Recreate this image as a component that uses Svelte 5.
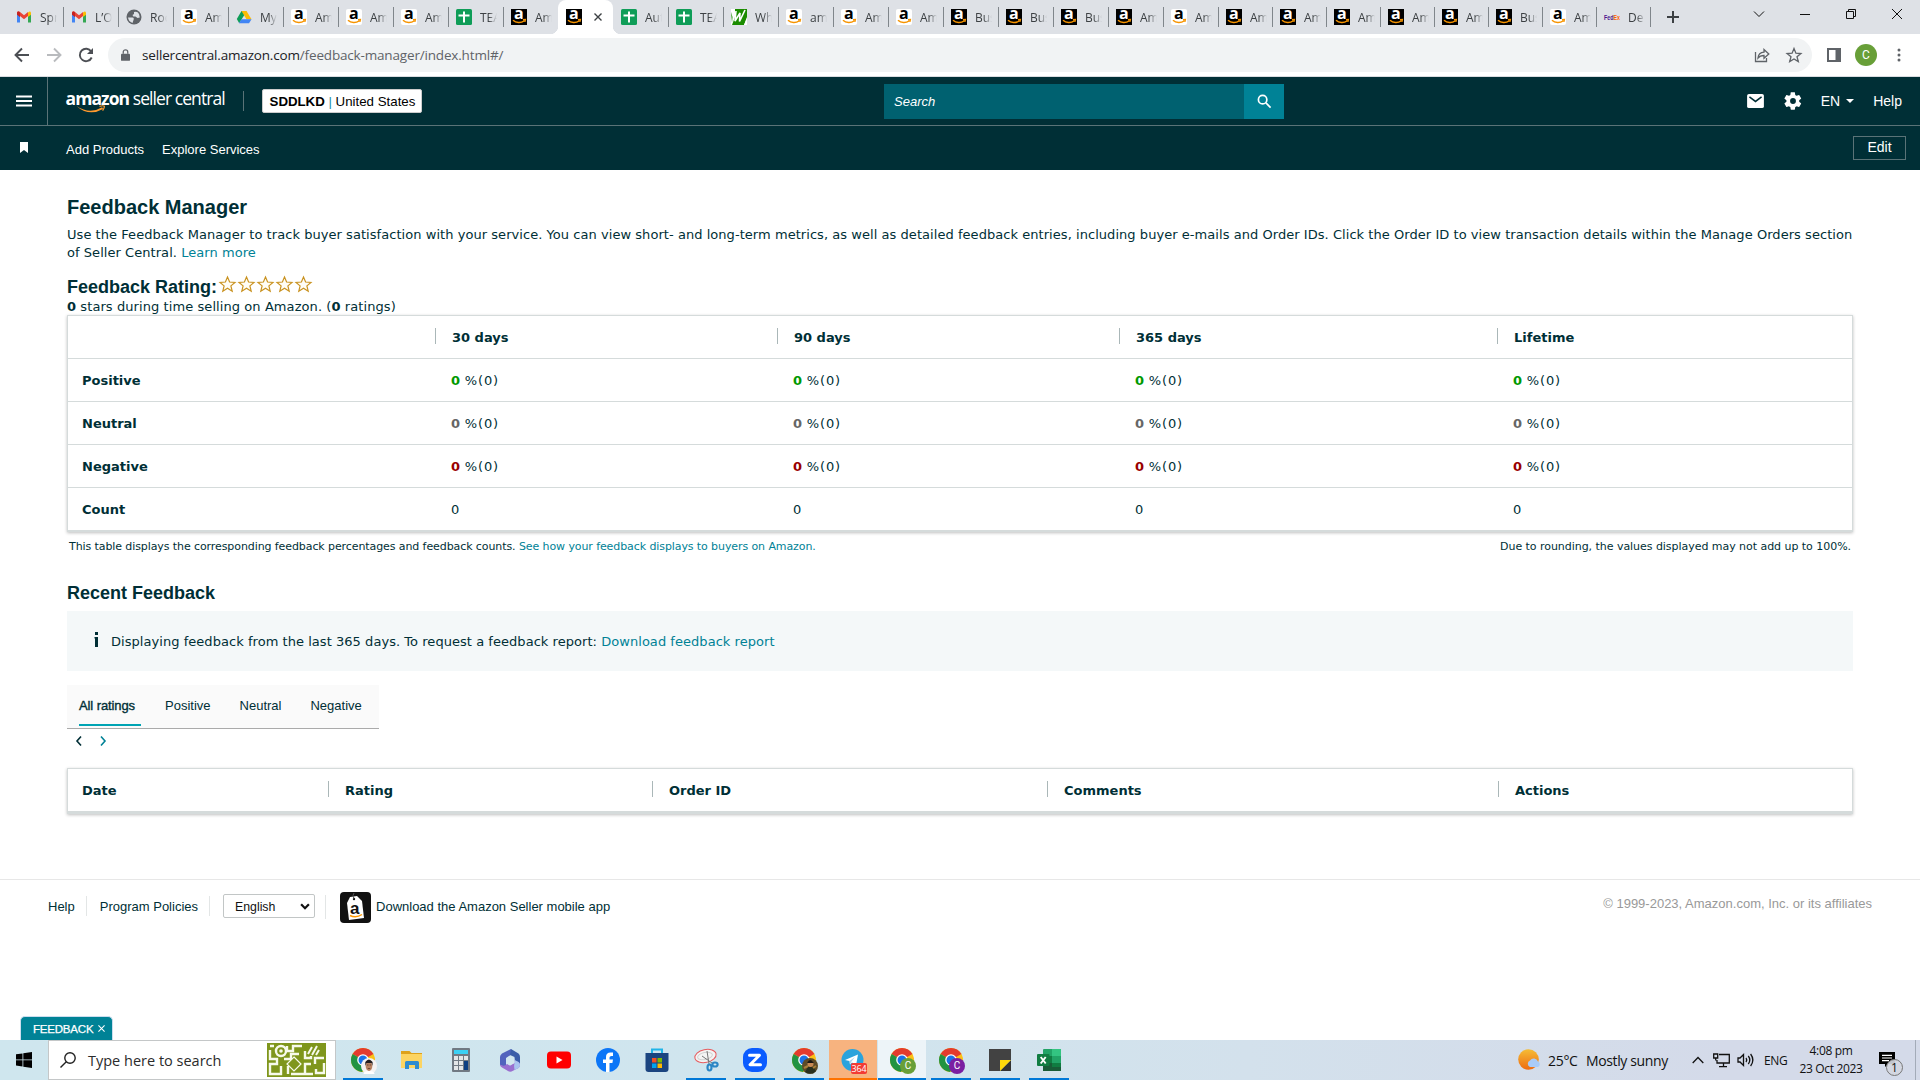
<script>
  const tabs = [
    ['gmail', 'Spr'], ['gmail', 'L’O'], ['globe', 'Roc'], ['amz', 'Am'], ['drive', 'My'],
    ['amz', 'Am'], ['amz', 'Am'], ['amz', 'Am'], ['sheets', 'TEA'], ['amzDark', 'Am'],
    ['amzDark', '', true], ['sheets', 'Aut'], ['sheets', 'TEA'], ['wh', 'Wh'], ['amz', 'am'],
    ['amz', 'Am'], ['amz', 'Am'], ['amzDark', 'Bus'], ['amzDark', 'Bus'], ['amzDark', 'Bus'],
    ['amzDark', 'Am'], ['amz', 'Am'], ['amzDark', 'Am'], ['amzDark', 'Am'], ['amzDark', 'Am'],
    ['amzDark', 'Am'], ['amzDark', 'Am'], ['amzDark', 'Bus'], ['amz', 'Am'], ['fedex', 'De']
  ].map(([icon, title, active]) => ({ icon, title, active }));

  const periods = ['30 days', '90 days', '365 days', 'Lifetime'];
  const rows = [
    { label: 'Positive', tone: 'green' },
    { label: 'Neutral', tone: 'gray' },
    { label: 'Negative', tone: 'red' }
  ];
  const columns = ['Date', 'Rating', 'Order ID', 'Comments', 'Actions'];
  const apps = [
    { icon: 'chrome', badge: 'face', open: true }, { icon: 'files' }, { icon: 'calc' }, { icon: 'm365' },
    { icon: 'youtube' }, { icon: 'facebook' }, { icon: 'store' }, { icon: 'snip', open: true },
    { icon: 'zoom', open: true }, { icon: 'chrome', badge: 'photo', open: true },
    { icon: 'telegram', alert: true }, { icon: 'chrome', badge: 'green', current: true },
    { icon: 'chrome', badge: 'purple', open: true }, { icon: 'sticky', open: true }, { icon: 'excel', open: true }
  ];
</script>

{#snippet favicon(kind)}
  {#if kind === 'amz' || kind === 'amzDark'}
    <span class="amz" class:dark={kind === 'amzDark'}>
      <b>a</b>
      <svg viewBox="0 0 16 16"><path d="M2 11.300c3 2.900 8 3 11 .7M12 10.800l2.300-.2-.5 2.200" fill="none" stroke="#f79400" stroke-width="1.500" /></svg>
    </span>
  {:else}
    <svg class="fav" viewBox="0 0 16 16">
      {#if kind === 'gmail'}
        <path d="M1 4v9.500h3V7z" fill="#4285f4" /><path d="M15 4v9.500h-3V7z" fill="#34a853" />
        <path d="M1 4.500V3.500Q2.500 1.500 4 3l4 3.200L12 3v4L8 10.300 4 7v1z" fill="#ea4335" />
        <path d="M1 4q.2-1.800 2-1.300L4 3.500V8L1 5.700z" fill="#c5221f" /><path d="M15 4q-.2-1.800-2-1.300l-1 .8V8l3-2.300z" fill="#fbbc04" />
      {:else if kind === 'globe'}
        <circle cx="8" cy="8" r="7.500" fill="#5f6368" /><path d="M2 8.500h4.500q2 .5 1 2.500l-1 3Q2.500 12.500 2 8.500zM8 3q3.500-1 5 2l.8 3.500-2.300.5-2-1.500H7.300L6.500 6 8 5z" fill="#dee1e6" />
      {:else if kind === 'drive'}
        <path d="M5.500 2h5L8 6.400 3.200 14.300.8 10z" fill="#0f9d58" /><path d="M5.500 2h5l5 8.300h-5z" fill="#fbbc04" /><path d="M3 14.300 5.300 10.200h10.200L13 14.300z" fill="#4285f4" />
      {:else if kind === 'sheets'}
        <rect width="16" height="16" rx="1.500" fill="#0f9d58" /><path d="M8 2.500v11M2.500 6.500h11" stroke="#fff" stroke-width="2" />
      {:else if kind === 'wh'}
        <rect width="16" height="16" fill="#fff" /><path d="M4 0h12v8l-3 8H1l3-8z" fill="#1b8c00" /><path d="M0 3 1.500 8 1 14z" fill="#1b8c00" /><path d="M5 2 4 12 9 4 8.500 12.500 14 1" fill="none" stroke="#fff" stroke-width="1.600" /><path d="m16 9-3 7h3z" fill="#fff" />
      {:else if kind === 'fedex'}
        <text x="0" y="10.500" font-size="7.500" font-weight="700" fill="#4d148c" textLength="16" lengthAdjust="spacingAndGlyphs">Fed<tspan fill="#ff6200">Ex</tspan></text>
      {/if}
    </svg>
  {/if}
{/snippet}

{#snippet appIcon(kind, badge)}
  <svg class="app" viewBox="0 0 24 24">
    {#if kind === 'chrome'}
      <circle cx="12" cy="12" r="12" fill="#fbc116" />
      <path d="M12 12 1.600 6A12 12 0 0 1 22.400 6z" fill="#e33b2e" />
      <path d="M12 12 1.600 6A12 12 0 0 0 11 24l5-8z" fill="#229342" />
      <circle cx="12" cy="12" r="5.800" fill="#fff" /><circle cx="12" cy="12" r="4.500" fill="#1a73e8" />
    {:else if kind === 'files'}
      <path d="M1 3h8.500l2 2H22v5H1z" fill="#dea21b" /><path d="M1 6h21v14H1z" fill="#fcd462" />
      <path d="M5 21v-6.500q0-1.500 1.500-1.500h11q1.500 0 1.500 1.500V21h-4v-4H9v4z" fill="#2e8bd0" />
    {:else if kind === 'calc'}
      <rect x="3" width="18" height="24" rx="1" fill="#707983" /><rect x="5" y="2" width="14" height="4" fill="#3bd0f4" />
      <g fill="#e3e6e8"><path d="M5 8h4v4H5zM10 8h4v4h-4zM15 8h4v4h-4zM5 13h4v4H5zM10 13h4v4h-4zM5 18h4v4H5zM10 18h4v4h-4z" /></g><path d="M15 13h4v9h-4z" fill="#0d3f83" />
    {:else if kind === 'm365'}
      <path d="M13 1 4 5.500Q2 7 2 9v8l6 3V10l6-4z" fill="#5263bd" />
      <path d="m13 1 7.500 4.500Q22 6.500 22 9v7l-5.500-3V9L12 7z" fill="#3a5da8" />
      <path d="M2 16.500q4 2.500 7-.500l3 1.500 4.500-2.500V12l4 2q1.500 1 1.500 3t-1.500 3l-7 3.500q-2 .5-3.500-.5l-6-3.500Q2 18.500 2 16.500z" fill="#9a6fd0" />
      <path d="m16.500 12 4 2q1.500 1 1.500 3t-1.500 3l-4 2q-1-4 0-7z" fill="#a9c4f0" />
      <path d="m12 8 4.500 2.500V15L12 17.500 8.500 15v-4.500z" fill="#d1e6ef" />
    {:else if kind === 'youtube'}
      <rect y="3.500" width="24" height="17" rx="4" fill="#f00" /><path d="m9.500 8.500 6 3.500-6 3.500z" fill="#fff" />
    {:else if kind === 'facebook'}
      <circle cx="12" cy="12" r="12" fill="#0c76f7" /><path d="M10 24v-9H7v-3.500h3V9q0-4.500 4.500-4.500H17V8h-1.500q-2 0-2 1.600v1.900H17l-.6 3.500h-2.900v9z" fill="#fff" />
    {:else if kind === 'store'}
      <path d="M7 6V1.500h10V6" fill="none" stroke="#1fb4e8" stroke-width="2" /><path d="M.5 5h23v16q0 3-3 3h-17q-3 0-3-3z" fill="#1b4580" />
      <path d="M7 10h4.500v4.500H7z" fill="#f25022" /><path d="M12.500 10H17v4.500h-4.500z" fill="#7fba00" /><path d="M7 15.500h4.500V20H7z" fill="#00a4ef" /><path d="M12.500 15.500H17V20h-4.500z" fill="#ffb900" />
    {:else if kind === 'snip'}
      <ellipse cx="11.500" cy="8" rx="10.800" ry="6.500" fill="#f4f4f4" stroke="#e65b5e" transform="rotate(-12 11.500 8)" />
      <ellipse cx="11" cy="8" rx="7.500" ry="3.500" fill="none" stroke="#d1d1d1" transform="rotate(-12 11 8)" />
      <path d="m13 3 2 13M8 8l10 7" stroke="#777" /><g fill="none" stroke="#2b86c5" stroke-width="2.200"><ellipse cx="15.500" cy="19.500" rx="2" ry="3" /><ellipse cx="21" cy="16.500" rx="2.600" ry="2" /></g>
    {:else if kind === 'zoom'}
      <rect width="24" height="24" rx="9" fill="#0b5cff" /><path d="M6.500 7.300h10L7 16.800h10.500" fill="none" stroke="#fff" stroke-width="3" stroke-linejoin="round" stroke-linecap="round" />
    {:else if kind === 'telegram'}
      <circle cx="11.500" cy="12" r="11" fill="#2ba3dc" /><path d="m4 12 13-5.500-2 11-4-3-2 2-.5-3.500z" fill="#fff" /><path d="m8.500 13 5.500-4-3.500 4.500-1.500 3z" fill="#a9d5ee" />
    {:else if kind === 'sticky'}
      <path d="M1 1h22v11L12 23H1z" fill="#424242" /><path d="M23 12v11H12z" fill="#333" /><path d="M12 12h11L12 23z" fill="#ffd90b" />
    {:else}
      <rect x="6" y="1" width="18" height="22" rx="1" fill="#21a366" /><path d="M15 1h9v7h-9z" fill="#33c481" /><path d="M6 8h9v7H6z" fill="#107c41" /><path d="M6 15h18v8H6z" fill="#185c37" /><path d="M15 15h9v4h-9z" fill="#107c41" />
      <rect y="6" width="12.500" height="12" rx="1" fill="#107c41" /><path d="m3.700 9 5 6.500M8.700 9l-5 6.500" stroke="#fff" stroke-width="1.900" />
    {/if}
  </svg>
  {#if badge === 'green' || badge === 'purple'}
    <span class="avatar {badge}">C</span>
  {:else if badge === 'face'}
    <svg class="avatar" viewBox="0 0 16 16"><circle cx="8" cy="8" r="8" fill="#f5f3f2" /><path d="M2.500 16q0-3 5.500-3t5.500 3z" fill="#fff" /><ellipse cx="8" cy="8" rx="3.300" ry="5" fill="#b98362" /><path d="M4.300 8V4q3.500-5 7.300 0v4l-1-3H5.500z" fill="#231e20" /><path d="M6 7h1.500M8.700 7h1.500M6.800 10.500h2.500" stroke="#513123" stroke-width=".7" /></svg>
  {:else if badge === 'photo'}
    <svg class="avatar" viewBox="0 0 16 16"><circle cx="8" cy="8" r="8" fill="#5d4b27" /><circle cx="8.500" cy="6" r="3" fill="#c78a55" /><path d="M5 5q3-6 7 0z" fill="#191713" /><path d="M3 14l3-5h5l3 4-3 2.500H6z" fill="#28301e" /><path d="m2 10 4-2M11 10l3-2" stroke="#a88038" stroke-width="2" /></svg>
  {/if}
{/snippet}

<div class="screen">
  <div class="tabstrip">
    {#each tabs as tab, i}
      <div class="tab" class:active={tab.active} class:slim={i > 21} class:bare={i === 9}>
        {@render favicon(tab.icon)}
        {#if tab.active}
          <svg class="close" viewBox="0 0 8 8"><path d="m.5.5 7 7m0-7-7 7" /></svg>
        {:else}
          <span class="title">{tab.title}</span>
        {/if}
      </div>
    {/each}
    <svg class="plus" viewBox="0 0 12 12"><path d="M6 0v12M0 6h12" /></svg>
    <div class="winbtns">
      <svg viewBox="0 0 12 12"><path d="m1 3.500 5 5 5-5" /></svg>
      <svg viewBox="0 0 12 12"><path d="M1 6.500h10" /></svg>
      <svg viewBox="0 0 12 12"><path d="M1.500 3.500h7v7h-7zM3.500 3.500v-2h7v7h-2" /></svg>
      <svg viewBox="0 0 12 12"><path d="m1 1 10 10M11 1 1 11" /></svg>
    </div>
  </div>

  <div class="toolbar">
    <svg class="nav" viewBox="0 0 16 16"><path d="M15 8H2M8 1.500 1.500 8 8 14.500" /></svg>
    <svg class="nav faded" viewBox="0 0 16 16"><path d="M1 8h13M8 1.500 14.500 8 8 14.500" /></svg>
    <svg class="nav" viewBox="0 0 16 16"><path d="M13.700 10.500A6.200 6.200 0 1 1 13.200 4.500" /><path d="M15 1v6H9z" class="solid" /></svg>
    <div class="omnibox">
      <svg class="lock" viewBox="0 0 10 13"><path d="M1 5h8q1 0 1 1v6q0 1-1 1H1q-1 0-1-1V6q0-1 1-1z" fill="#5f6368" /><path d="M2.500 5V3a2.500 2.300 0 0 1 5 0v2" fill="none" stroke="#5f6368" stroke-width="1.400" /></svg>
      <span class="url"><b>sellercentral.amazon.com</b>/feedback-manager/index.html#/</span>
      <svg class="omni share" viewBox="0 0 16 16"><path d="M1.500 5v9.500h11V11M4 11q.5-5.500 6-5.800V2.500L14.800 7 10 11.300V8.500Q6 8.500 4 11z" /></svg>
      <svg class="omni" viewBox="0 0 16 16"><path d="m8 1.500 1.900 4.700 5 .3-3.900 3.200 1.300 4.900L8 11.900l-4.300 2.700L5 9.700 1.100 6.500l5-.3z" /></svg>
    </div>
    <svg class="panel" viewBox="0 0 14 14"><path d="M1 1h12v12H1z" fill="none" stroke="#5f6368" stroke-width="2" /><path d="M8.500 1H13v12H8.500z" fill="#5f6368" /></svg>
    <span class="profile">C</span>
    <svg class="dots" viewBox="0 0 4 14"><circle cx="2" cy="2" r="1.500" /><circle cx="2" cy="7" r="1.500" /><circle cx="2" cy="12" r="1.500" /></svg>
  </div>

  <header class="top">
    <div class="burger"><svg viewBox="0 0 16 12"><path d="M0 1.500h16M0 6h16M0 10.500h16" /></svg></div>
    <div class="logo">
      <span class="word"><b>amazon</b> seller central</span>
      <svg viewBox="0 0 34 9"><path d="M0 1q15 10 29 1.500l1 2Q14 13.500 0 1z" fill="#ff9a2e" /><path d="M26 1.500q4-1.200 5.500-.2.300 2-2 5" fill="none" stroke="#ff9a2e" stroke-width="1.400" /></svg>
    </div>
    <span class="rule"></span>
    <button class="store"><b>SDDLKD</b>&nbsp;<i>|</i>&nbsp;<span>United States</span></button>
    <div class="search"><em>Search</em><span><svg viewBox="0 0 16 16"><circle cx="6" cy="6" r="4.500" /><path d="m9.500 9.500 5 5" /></svg></span></div>
    <div class="tools">
      <svg class="mail" viewBox="0 0 18 15"><rect width="18" height="15" rx="2" fill="#fff" /><path d="m2.500 3 6.500 5 6.500-5" fill="none" stroke="#002f36" stroke-width="1.600" /></svg>
      <svg class="gear" viewBox="0 0 24 24"><path fill="#fff" d="M19.400 13c.1-.7.100-1.300 0-2l2.200-1.700c.2-.2.300-.5.100-.7l-2.100-3.600c-.1-.2-.4-.3-.6-.2l-2.600 1c-.5-.4-1.100-.7-1.700-1L14.300 2c0-.3-.2-.4-.5-.4H9.700c-.3 0-.5.100-.5.400l-.4 2.800c-.6.300-1.200.6-1.700 1l-2.600-1c-.2-.1-.5 0-.6.200L1.800 8.600c-.1.200-.1.500.1.700L4.100 11v2l-2.200 1.700c-.2.200-.2.500-.1.700L3.900 19c.1.200.4.300.6.200l2.600-1c.5.400 1.100.7 1.700 1l.4 2.800c0 .3.200.4.500.4h4.100c.3 0 .5-.1.500-.4l.4-2.800c.6-.3 1.200-.6 1.700-1l2.600 1c.2.100.5 0 .6-.2l2.100-3.600c.1-.2.100-.5-.1-.7zM12 15.500a3.500 3.500 0 1 1 0-7 3.500 3.500 0 0 1 0 7z" /></svg>
      <span class="lang">EN<i></i></span>
      <span>Help</span>
    </div>
  </header>
  <nav class="sub">
    <svg class="mark" viewBox="0 0 8 11"><path d="M0 0h8v11L4 8l-4 3z" fill="#fff" /></svg>
    <span>Add Products</span><span>Explore Services</span>
    <button>Edit</button>
  </nav>

  <main>
    <h1>Feedback Manager</h1>
    <p class="intro"><span>Use the Feedback Manager to track buyer satisfaction with your service. You can view short- and long-term metrics, as well as detailed feedback entries, including buyer e-mails and Order IDs. Click the Order ID to view transaction details within the Manage Orders section</span><br />of Seller Central. <a href="#/">Learn more</a></p>
    <div class="rating">
      <h2>Feedback Rating:</h2>
      {#each Array(5) as _}
        <svg viewBox="0 0 17 16"><path d="m8.500 1 2.100 5 5.400.4-4.100 3.500 1.300 5.300-4.700-2.900-4.700 2.900 1.300-5.300L1 6.400 6.400 6z" /></svg>
      {/each}
    </div>
    <p class="stars"><b>0</b> stars during time selling on Amazon. (<b>0</b> ratings)</p>

    <section class="grid summary">
      <div class="row head">
        <span></span>
        {#each periods as p}<span>{p}</span>{/each}
      </div>
      {#each rows as r}
        <div class="row">
          <b>{r.label}</b>
          {#each periods as _}<span><b class={r.tone}>0</b> <span class="pct">%(0)</span></span>{/each}
        </div>
      {/each}
      <div class="row">
        <b>Count</b>
        {#each periods as _}<span>0</span>{/each}
      </div>
    </section>
    <div class="notes">
      <span class="n1">This table displays the corresponding feedback percentages and feedback counts. <a href="#/">See how your feedback displays to buyers on Amazon.</a></span>
      <span class="n2">Due to rounding, the values displayed may not add up to 100%.</span>
    </div>

    <h2 class="recent">Recent Feedback</h2>
    <div class="info">
      <svg viewBox="0 0 5 15"><path d="M1 0h3v3H1zM.5 5H4v10H1V6.500H.5z" fill="#002f36" /></svg>
      <span>Displaying feedback from the last 365 days. To request a feedback report: <a href="#/">Download feedback report</a></span>
    </div>
    <div class="filters">
      <span class="on">All ratings</span><span>Positive</span><span>Neutral</span><span>Negative</span>
    </div>
    <div class="pager">
      <svg viewBox="0 0 6 10"><path d="M5 .5 1 5l4 4.500" stroke="#002f36" /></svg>
      <svg viewBox="0 0 6 10"><path d="m1 .5 4 4.500-4 4.500" stroke="#008296" /></svg>
    </div>
    <section class="grid recents">
      <div class="row head">
        {#each columns as c}<span>{c}</span>{/each}
      </div>
    </section>
  </main>

  <footer>
    <span>Help</span><i></i><span>Program Policies</span><i></i>
    <span class="select">English<svg viewBox="0 0 9 6"><path d="m1 1 3.500 3.500L8 1" /></svg></span><i class="tall"></i>
    <svg class="tag" viewBox="0 0 31 31"><rect width="31" height="31" rx="4" fill="#111" /><path d="m7 11 3-6 7-1 5 5 2 17-15 2z" fill="#fff" /><circle cx="14" cy="7" r="1.200" fill="#111" /><path d="M14 7q-2-4 0-6" stroke="#555" fill="none" /><text x="10" y="22" font-size="17" font-weight="700" fill="#111">a</text><path d="M10 23.500q6 3 12-1" fill="none" stroke="#f90" stroke-width="1.500" /></svg>
    <span class="app-link">Download the Amazon Seller mobile app</span>
    <span class="copy">© 1999-2023, Amazon.com, Inc. or its affiliates</span>
  </footer>

  <div class="fbtab">FEEDBACK<svg viewBox="0 0 8 8"><path d="m.5.5 7 7m0-7-7 7" /></svg></div>

  <div class="taskbar">
    <svg class="win" viewBox="0 0 16 16"><path d="M0 2.300 6.500 1.400v6.100H0zM7.300 1.300 16 0v7.500H7.300zM0 8.300h6.500v6.200L0 13.600zM7.300 8.300H16V16l-8.700-1.300z" /></svg>
    <div class="find">
      <svg class="glass" viewBox="0 0 16 16"><circle cx="10" cy="6" r="5.200" /><path d="M6.300 9.700.5 15.500" /></svg>
      <span>Type here to search</span>
      <svg class="maze" viewBox="0 0 59 34"><rect width="59" height="34" fill="#7f961c" /><g fill="none" stroke="#f7faeb" stroke-width="2.400"><path d="M3 3h4M20 3v5h6V3h9M3 7v9h7v5H3v10h11v-8M17 16h7v-5h8M21 31v-8M38 8v7h6v-2M57 15h-9v6M57 20v10h-8v-4M38 31V21h6M24 31h22" /><circle cx="14" cy="8" r="5" /></g><circle cx="14" cy="8" r="1.800" fill="#f7faeb" /><path d="m27 14 7 7-7 7-7-7z" fill="#7f961c" stroke="#f7faeb" stroke-width="1.200" /><path d="m41 11 4-7M45 12l5-9M49 12l3-5" stroke="#f7faeb" stroke-width="2" /></svg>
    </div>
    <div class="apps">
      {#each apps as a}
        <div class="slot" class:open={a.open} class:alert={a.alert} class:current={a.current}>
          {@render appIcon(a.icon, a.badge)}
          {#if a.alert}<span class="count">364</span>{/if}
        </div>
      {/each}
    </div>
    <svg class="weather" viewBox="0 0 24 22"><defs><linearGradient id="sun" x2="0" y2="1"><stop stop-color="#f5bd35" /><stop offset="1" stop-color="#ee6b12" /></linearGradient></defs><circle cx="10.500" cy="10.500" r="10.300" fill="url(#sun)" /><path d="M12 18a3.500 3.500 0 0 1 0-6.500 4.500 4.500 0 0 1 8 1 3 3 0 0 1 0 5.500z" fill="#a9cbf8" /></svg>
    <span class="temp">25°C</span><span class="sky">Mostly sunny</span>
    <svg class="up" viewBox="0 0 12 8"><path d="m.7 7 5.300-5.500L11.300 7" /></svg>
    <svg class="net" viewBox="0 0 17 15"><path d="M6 1.500h10.300v8.500H4V7M10.500 10v3.500M6 13.700h8M.7 1h4v4h-4zM2.700 5v2.500" /></svg>
    <svg class="vol" viewBox="0 0 17 14"><path d="M1 5h2l3.500-3.500v11L3 9H1zM9 5q1.500 2 0 4M11.300 3q3 4 0 8M13.600 1q4.500 6 0 12" /></svg>
    <span class="eng">ENG</span>
    <div class="clock"><span>4:08 pm</span><span>23 Oct 2023</span></div>
    <div class="bell">
      <svg viewBox="0 0 16 16"><path d="M0 0h16v12H9l-3 3v-3H0z" /><path d="M3 3.300h10M3 6h10M3 8.700h7" stroke="#fff" stroke-width="1.200" /></svg>
      <span>1</span>
    </div>
    <span class="edge"></span>
  </div>
</div>

<style>
  :global(body) { margin: 0; overflow: hidden; background: #fff; }
  .screen { width: 1920px; height: 1080px; display: flex; flex-direction: column; font-family: "Liberation Sans", Arial, sans-serif; color: #002f36; overflow: hidden; position: relative; }
  * { box-sizing: border-box; }
  svg { display: block; flex: none; overflow: visible; }
  a { color: #008296; text-decoration: none; }
  button { font: inherit; margin: 0; }

  .tabstrip { height: 34px; flex: none; background: #dee1e6; display: flex; align-items: stretch; padding-left: 8px; }
  .tab { width: 55px; flex: none; display: flex; align-items: center; padding: 0 0 0 8px; position: relative; }
  .tab.slim { width: 54px; }
  .tab:not(.active):not(.bare)::after { content: ""; position: absolute; right: -1px; top: 7px; width: 1px; height: 20px; background: #80868b; }
  .tab.active { background: #fff; border-radius: 8px 8px 0 0; }
  .tab.active::before, .tab.active::after { content: ""; position: absolute; bottom: 0; width: 8px; height: 8px; }
  .tab.active::before { left: -8px; background: radial-gradient(circle at 0 0, transparent 8px, #fff 8.500px); }
  .tab.active::after { right: -8px; background: radial-gradient(circle at 100% 0, transparent 8px, #fff 8.500px); }
  .title { margin-left: 8px; width: 17px; white-space: nowrap; font: 12px "Open Sans", "Noto Sans", sans-serif; color: #3c4043; -webkit-mask-image: linear-gradient(90deg, #000 50%, transparent); mask-image: linear-gradient(90deg, #000 50%, transparent); }
  .fav, .amz { width: 16px; height: 16px; flex: none; }
  .amz { background: #fff; border-radius: 2px; position: relative; color: #000; }
  .amz.dark { background: #000; color: #fff; border-radius: 0; }
  .amz b { position: absolute; left: 3px; top: -4px; font: 700 16px/16px "Open Sans", sans-serif; }
  .amz svg { position: absolute; inset: 0; width: 16px; height: 16px; }
  .close { width: 8px; height: 8px; margin-left: 12px; }
  .close path { stroke: #3c4043; stroke-width: 1.400; }
  .plus { width: 12px; height: 12px; margin: 11px 0 0 17px; }
  .plus path { stroke: #3c4043; stroke-width: 2; }
  .winbtns { margin: 8px 17px 0 auto; display: flex; gap: 34px; }
  .winbtns svg { width: 12px; height: 12px; }
  .winbtns path { fill: none; stroke: #111; }

  .toolbar { height: 43px; flex: none; background: #fff; border-bottom: 1px solid #dadce0; display: flex; align-items: center; padding-left: 14px; }
  .nav { width: 16px; height: 16px; margin-right: 16px; }
  .nav path { fill: none; stroke: #4c4f54; stroke-width: 1.900; }
  .nav .solid { fill: #4c4f54; stroke: none; }
  .nav.faded path { stroke: #b9bbbe; }
  .omnibox { width: 1704px; margin-left: -2px; height: 34px; border-radius: 17px; background: #f1f3f4; display: flex; align-items: center; padding: 0 10px 0 13px; }
  .lock { width: 9px; height: 12px; }
  .url { margin-left: 12px; font: 13.500px "Open Sans", "Noto Sans", sans-serif; color: #5f6368; letter-spacing: -0.170px; }
  .url b { font-weight: 400; color: #202124; }
  .omni { width: 16px; height: 16px; }
  .omni path { fill: none; stroke: #5f6368; stroke-width: 1.300; }
  .share { margin: 0 16px 0 auto; }
  .panel { width: 14px; height: 14px; margin-left: 15px; }
  .profile { width: 22px; height: 22px; border-radius: 50%; background: #689f38; color: #fff; font: 12px/22px Roboto, sans-serif; text-align: center; margin-left: 14px; }
  .dots { width: 4px; height: 14px; fill: #5f6368; margin-left: 20px; }

  .top { height: 49px; flex: none; background: #002f36; border-bottom: 1px solid #5a7377; display: flex; align-items: center; color: #fff; font-size: 14px; }
  .burger { width: 48px; height: 48px; border-right: 1px solid #5a7377; padding: 18px 0 0 16px; }
  .burger svg { width: 16px; height: 12px; }
  .burger path { stroke: #fff; stroke-width: 1.800; }
  .logo { width: 160px; margin-left: 18px; height: 24px; position: relative; }
  .word { position: absolute; left: -.500px; top: -3px; white-space: nowrap; font: 17.500px/24px "Open Sans", sans-serif; letter-spacing: -0.930px; }
  .logo svg { position: absolute; left: 9px; top: 16px; width: 33px; height: 8px; }
  .rule { width: 1px; height: 20px; background: #5a7377; margin-left: 17px; }
  .store { margin-left: 18px; width: 160px; height: 24px; background: #fff; border: 1px solid #ccc; border-radius: 2px; padding: 0 0 0 1px; display: flex; align-items: center; justify-content: center; font-size: 13.300px; color: #000; white-space: nowrap; }
  .store b { letter-spacing: -.050px; }
  .store i { color: #1d8ea0; font-style: normal; }
  .search { width: 400px; height: 35px; margin-left: 462px; background: #006170; display: flex; align-items: center; }
  .search em { padding-left: 10px; flex: 1; font-size: 13px; }
  .search span { width: 40px; height: 35px; background: #008296; display: grid; place-items: center; }
  .search svg { width: 15px; height: 15px; }
  .search svg * { fill: none; stroke: #fff; stroke-width: 1.800; }
  .tools { display: flex; align-items: center; margin-left: auto; padding-right: 18px; }
  .mail { width: 17px; height: 14px; }
  .gear { width: 20px; height: 20px; margin: 0 18px 0 19px; }
  .lang { display: flex; align-items: center; margin-right: 19px; }
  .lang i { border: 4.500px solid transparent; border-top-color: #fff; border-bottom: 0; margin-left: 6px; }

  .sub { height: 44px; flex: none; background: #002f36; display: flex; align-items: center; color: #fff; font-size: 13px; padding-right: 14px; }
  .mark { width: 8px; height: 11px; margin: -2px 38px 0 20px; }
  .sub span { margin-right: 18px; padding-top: 2px; }
  .sub button { margin: -1px 0 0 auto; width: 53px; height: 24px; background: none; border: 1px solid #5a7377; color: #fff; padding: 0 0 2px; font-size: 14px; }

  main { padding: 0 67px; flex: none; height: 709px; font: 13px/18px "DejaVu Sans", Verdana, sans-serif; }
  h1, h2 { font-family: "Liberation Sans", Arial, sans-serif; margin: 0; white-space: nowrap; }
  h1 { font-size: 20px; line-height: 26px; padding-top: 24px; }
  h2 { font-size: 18px; line-height: 22px; }
  p { margin: 0; white-space: nowrap; }
  .intro { margin-top: 6px; letter-spacing: .050px; }
  .rating { display: flex; margin-top: 14px; height: 22px; }
  .rating h2 { margin-right: 2px; }
  .rating svg { width: 17px; height: 16px; margin: 0 2px 0 0; }
  .rating path { fill: #fffdf6; stroke: #c9921f; stroke-width: 1.200; }
  .stars { line-height: 18px; letter-spacing: .080px; }
  .grid { border: 1px solid #d5dbdb; border-bottom-width: 2px; box-shadow: 0 1px 3px rgba(0, 0, 0, .25); width: 1786px; }
  .row { height: 43px; display: grid; align-items: center; border-top: 1px solid #d5dbdb; padding-top: 1px; }
  .summary .row { grid-template-columns: 370px 342px 342px 378px 1fr; }
  .summary { margin-top: -1px; }
  .recents { margin-top: 22px; border-bottom-width: 3px; }
  .recents .row { grid-template-columns: 263px 324px 395px 451px 1fr; }
  .row > * { padding-left: 14px; }
  .row > * + * { padding-left: 13px; }
  .row.head > * + * { padding-left: 14px; }
  .row:first-child { border-top: 0; height: 42px; padding-top: 2px; }
  .head { font-weight: 700; }
  .head > span { position: relative; line-height: 18px; }
  .head > span + span::before { content: ""; position: absolute; left: -3px; top: -1px; width: 1px; height: 16px; background: #aab7b8; }
  .pct { letter-spacing: .900px; margin-left: .500px; }
  .green { color: #090; }
  .gray { color: #666; }
  .red { color: #900; }
  .notes { display: flex; justify-content: space-between; font-size: 11px; line-height: 16px; padding: 7px 2px 0; white-space: nowrap; }
  .n1 { letter-spacing: -.090px; }
  .n2 { letter-spacing: -.040px; }
  .recent { margin-top: 27px; }
  .info { height: 60px; margin-top: 7px; padding-top: 2px; background: #f4f8f9; display: flex; align-items: center; padding-left: 27px; white-space: nowrap; letter-spacing: .045px; }
  .info svg { width: 5px; height: 15px; margin: -6px 12px 0 0; }
  .filters { margin-top: 14px; width: 312px; height: 44px; background: #fafafa; border-bottom: 1px solid #aaa; display: flex; padding-left: 12px; font: 13px/41px "Liberation Sans", Arial, sans-serif; white-space: nowrap; }
  .filters span { flex: none; margin-right: 29px; }
  .filters .on { -webkit-text-stroke: .35px #002f36; border-bottom: 2px solid #00a4b4; width: 62px; margin-right: 24px; height: 41px; letter-spacing: -.100px; }
  .pager { display: flex; gap: 18px; padding: 7px 0 0 9px; }
  .pager svg { width: 6px; height: 10px; }
  .pager path { fill: none; stroke-width: 1.600; }

  footer { border-top: 1px solid #e7e7e7; height: 137px; flex: none; display: flex; align-items: flex-start; padding: 11px 48px 0; font-size: 13px; line-height: 32px; white-space: nowrap; }
  footer i { width: 1px; height: 20px; background: #e3e6e6; margin: 5px 13px 0 11px; }
  footer i + .select { margin-left: 0; }
  footer i.tall { height: 24px; margin: 4px 14px 0 10px; }
  .select { width: 92px; height: 24px; margin-top: 3px; border: 1px solid #c2c6c6; border-radius: 2px; display: flex; align-items: center; justify-content: space-between; padding: 1px 4px 0 11px; color: #111; font-size: 12.300px; line-height: 22px; }
  .select svg { width: 10px; height: 7px; }
  .select path { fill: none; stroke: #111; stroke-width: 2; }
  .tag { width: 31px; height: 31px; margin-top: 1px; }
  .app-link { margin-left: 5px; }
  .copy { margin: -3px 0 0 auto; color: #999; }

  .fbtab { position: absolute; left: 20px; top: 1016px; width: 93px; height: 24px; background: #008296; border: 1px solid #cde; border-bottom: 0; border-radius: 5px 5px 0 0; color: #fff; font-size: 11.500px; line-height: 24px; display: flex; align-items: center; padding-left: 12px; -webkit-text-stroke: .25px #fff; letter-spacing: -.2px; }
  .fbtab svg { width: 7px; height: 7px; margin-left: 5px; }
  .fbtab path { stroke: #fff; stroke-width: 1.200; }

  .taskbar { margin-top: auto; height: 40px; flex: none; background: linear-gradient(90deg, #cfe6ee, #d0e5ee 40%, #d3e1ec 65%, #d4dae9 90%, #d4dae9); display: flex; align-items: center; color: #111; font: 14.500px "Open Sans", "Noto Sans", sans-serif; white-space: nowrap; }
  .win { width: 16px; height: 16px; margin: 0 16px; }
  .find { width: 288px; height: 40px; background: #fff; border: 1px solid #c4c7c8; display: flex; align-items: center; padding-left: 11px; color: #2b2b2b; font-size: 14.500px; }
  .glass { width: 16px; height: 16px; margin-right: 12px; }
  .glass * { fill: none; stroke: #222; stroke-width: 1.400; }
  .maze { width: 59px; height: 34px; margin: 0 9px 0 auto; }
  .apps { display: flex; height: 40px; margin-left: 3px; }
  .slot { width: 48px; height: 40px; margin-right: 1px; position: relative; padding: 8px 0 0 12px; }
  .slot.open::after { content: ""; position: absolute; left: 4px; right: 4px; bottom: 0; height: 2px; background: #0078d7; }
  .slot.alert { background: #f7b37f; border-bottom: 2px solid #ff7300; }
  .slot.current { background: #edf4f8; border-bottom: 2px solid #0078d7; }
  .app { width: 24px; height: 24px; }
  .avatar { position: absolute; left: 22px; top: 18px; width: 16px; height: 16px; border-radius: 50%; color: #fff; font: 10px/16px Roboto, sans-serif; text-align: center; }
  .avatar.green { background: #689f38; }
  .avatar.purple { background: #7b1fa2; }
  .count { position: absolute; left: 22px; top: 23px; width: 16px; height: 11px; background: #f23c34; color: #fff; font: 9px/11px "Open Sans", sans-serif; border-radius: 2px; text-align: center; letter-spacing: -.2px; }
  .weather { width: 24px; height: 22px; margin-left: auto; }
  .temp { width: 38px; margin-left: 6px; font-size: 14px; letter-spacing: -.3px; }
  .sky { width: 83px; font-size: 14px; letter-spacing: -.370px; }
  .up { width: 12px; height: 8px; margin: 0 9px 0 23px; }
  .net { width: 17px; height: 15px; margin-right: 7px; }
  .vol { width: 17px; height: 14px; margin-right: 10px; }
  .up path, .net path, .vol path { fill: none; stroke: #111; stroke-width: 1.300; }
  .eng { width: 24px; font-size: 12px; letter-spacing: -.3px; }
  .clock { width: 64px; margin-left: 11px; display: flex; flex-direction: column; align-items: center; font-size: 12px; line-height: 18px; letter-spacing: -.350px; }
  .bell { position: relative; width: 16px; height: 16px; margin-left: 16px; }
  .bell svg { width: 16px; height: 16px; }
  .bell span { position: absolute; left: 7px; top: 7px; width: 17px; height: 17px; border-radius: 50%; background: rgba(212, 215, 223, .92); border: 1px solid #777; font: 12px/15px "Open Sans", sans-serif; text-align: center; }
  .edge { width: 1px; height: 40px; background: #a3abb8; margin: 0 4px 0 20px; }
</style>
